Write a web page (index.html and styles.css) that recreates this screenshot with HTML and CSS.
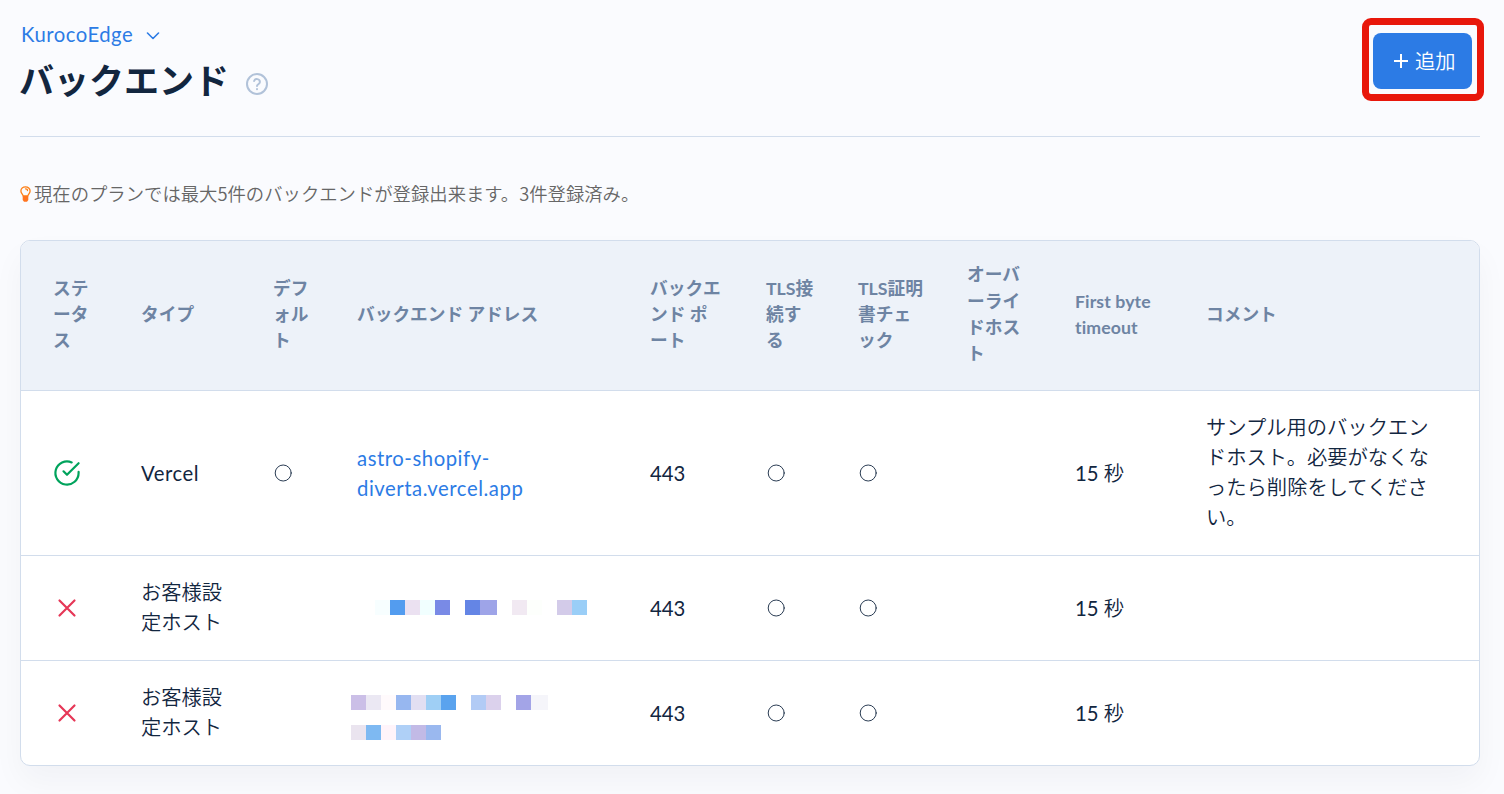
FILE: index.html
```
<!DOCTYPE html>
<html lang="ja">
<head>
    <meta charset="UTF-8">
    <meta name="viewport" content="width=device-width, initial-scale=1.0">
    <title>バックエンド</title>
    <link rel="stylesheet" href="styles.css">
</head>
<body>

<div class="container">
    <header class="header">
        <div class="header-title">
            <a class="pretitle" href="#"><span class="pretitle-text">KurocoEdge</span>
                <svg class="chevron" width="14" height="8" viewBox="0 0 14 8"><path d="M1.5 1l5.5 5.5L12.5 1"/></svg>
            </a>
            <h1 class="title"><span class="title-text">バックエンド</span>
                <svg class="help" width="24" height="24" viewBox="0 0 24 24"><circle cx="12" cy="12" r="10"/><path d="M9.1 9a3 3 0 0 1 5.8 1c0 2-2.9 2.4-2.9 4M12 17v.2"/></svg>
            </h1>
        </div>
        <div class="add-frame">
            <button class="add-button">
                <svg class="plus" width="14" height="14" viewBox="0 0 14 14"><path d="M7 0v14M0 7h14"/></svg>
                <span>追加</span>
            </button>
        </div>
    </header>

    <p class="note">
        <svg class="bulb" width="11" height="16" viewBox="0 0 11 16"><path class="bulb-glass" d="M3.2 10C3 8.5.9 7.400.9 5a4.6 4.2 0 0 1 9.2 0c0 2.4-2.1 3.5-2.3 5z"/><path class="bulb-base" d="M2.7 10h5.6v4l-1.3 1.700H4L2.7 14z"/><path class="bulb-glass" d="M5.5 2.8c1 0 2 .7 2 1.7"/></svg>
        <span>現在のプランでは最大5件のバックエンドが登録出来ます。3件登録済み。</span>
    </p>

    <div class="card">
        <table class="table">
            <colgroup>
                <col class="col-status"><col class="col-type"><col class="col-default"><col class="col-address"><col class="col-port"><col class="col-tls"><col class="col-cert"><col class="col-override"><col class="col-timeout"><col class="col-comment">
            </colgroup>
            <thead>
                <tr>
                    <th>ステ<br>ータ<br>ス</th>
                    <th>タイプ</th>
                    <th>デフ<br>ォル<br>ト</th>
                    <th>バックエンド アドレス</th>
                    <th>バックエ<br>ンド ポ<br>ート</th>
                    <th>TLS接<br>続す<br>る</th>
                    <th>TLS証明<br>書チェ<br>ック</th>
                    <th>オーバ<br>ーライ<br>ドホス<br>ト</th>
                    <th class="latin">First byte<br>timeout</th>
                    <th>コメント</th>
                </tr>
            </thead>
            <tbody>
                <tr class="row-tall">
                    <td><svg class="icon icon-ok" width="28" height="28" viewBox="0 0 28 28"><path d="M25.6 12.9v1.1a11.6 11.6 0 1 1-6.9-10.6M25.6 4.2L14 15.8l-3.5-3.5"/></svg></td>
                    <td class="latin">Vercel</td>
                    <td><svg class="icon circle" width="20" height="18" viewBox="0 0 20 18"><circle cx="10.2" cy="9" r="8"/></svg></td>
                    <td><a class="link" href="#">astro-shopify-<br>diverta.vercel.app</a></td>
                    <td class="num">443</td>
                    <td><svg class="icon circle" width="20" height="18" viewBox="0 0 20 18"><circle cx="10.2" cy="9" r="8"/></svg></td>
                    <td><svg class="icon circle" width="20" height="18" viewBox="0 0 20 18"><circle cx="10.2" cy="9" r="8"/></svg></td>
                    <td></td>
                    <td class="num">15 <span class="unit">秒</span></td>
                    <td class="text">サンプル用のバックエン<br>ドホスト。必要がなくな<br>ったら削除をしてくださ<br>い。</td>
                </tr>
                <tr>
                    <td><svg class="icon icon-ng" width="28" height="28" viewBox="0 0 28 28"><path d="M6.5 6.5l15 15M21.5 6.5l-15 15"/></svg></td>
                    <td class="text">お客様設<br>定ホスト</td>
                    <td></td>
                    <td>
                        <svg class="mosaic" width="240" height="16" viewBox="0 0 240 16">
                            <rect x="24" width="15" height="15" fill="#f7feff"/>
                            <rect x="39" width="15" height="15" fill="#539cef"/>
                            <rect x="54" width="15" height="15" fill="#ebe1f1"/>
                            <rect x="69" width="15" height="15" fill="#f1ffff"/>
                            <rect x="84" width="15" height="15" fill="#798ae6"/>
                            <rect x="114" width="15" height="15" fill="#6485e5"/>
                            <rect x="129" width="17" height="15" fill="#9ea4e8"/>
                            <rect x="161" width="15" height="15" fill="#f1e9f2"/>
                            <rect x="176" width="15" height="15" fill="#fdfffc"/>
                            <rect x="206" width="15" height="15" fill="#d3cbe9"/>
                            <rect x="221" width="15" height="15" fill="#9acef7"/>
                        </svg>
                    </td>
                    <td class="num">443</td>
                    <td><svg class="icon circle" width="20" height="18" viewBox="0 0 20 18"><circle cx="10.2" cy="9" r="8"/></svg></td>
                    <td><svg class="icon circle" width="20" height="18" viewBox="0 0 20 18"><circle cx="10.2" cy="9" r="8"/></svg></td>
                    <td></td>
                    <td class="num">15 <span class="unit">秒</span></td>
                    <td></td>
                </tr>
                <tr>
                    <td><svg class="icon icon-ng" width="28" height="28" viewBox="0 0 28 28"><path d="M6.5 6.5l15 15M21.5 6.5l-15 15"/></svg></td>
                    <td class="text">お客様設<br>定ホスト</td>
                    <td></td>
                    <td>
                        <svg class="mosaic" width="240" height="54" viewBox="0 0 240 54">
                            <rect x="0" y="9" width="15" height="15" fill="#cbbfe7"/>
                            <rect x="15" y="9" width="15" height="15" fill="#ebe8f3"/>
                            <rect x="30" y="9" width="15" height="15" fill="#fffafc"/>
                            <rect x="45" y="9" width="15" height="15" fill="#97b7f0"/>
                            <rect x="60" y="9" width="15" height="15" fill="#e2dff2"/>
                            <rect x="75" y="9" width="15" height="15" fill="#9fcff5"/>
                            <rect x="90" y="9" width="15" height="15" fill="#5aa3ee"/>
                            <rect x="120" y="9" width="15" height="15" fill="#b2cbf5"/>
                            <rect x="135" y="9" width="15" height="15" fill="#dbd1ec"/>
                            <rect x="165" y="9" width="15" height="15" fill="#a3a4e7"/>
                            <rect x="180" y="9" width="17" height="15" fill="#f5f5fa"/>
                            <rect x="0" y="39" width="15" height="15" fill="#eae4ef"/>
                            <rect x="15" y="39" width="15" height="15" fill="#7eb9f2"/>
                            <rect x="30" y="39" width="15" height="15" fill="#fff4fa"/>
                            <rect x="45" y="39" width="15" height="15" fill="#afd0f7"/>
                            <rect x="60" y="39" width="15" height="15" fill="#c2bae6"/>
                            <rect x="75" y="39" width="15" height="15" fill="#9ab8ef"/>
                        </svg>
                    </td>
                    <td class="num">443</td>
                    <td><svg class="icon circle" width="20" height="18" viewBox="0 0 20 18"><circle cx="10.2" cy="9" r="8"/></svg></td>
                    <td><svg class="icon circle" width="20" height="18" viewBox="0 0 20 18"><circle cx="10.2" cy="9" r="8"/></svg></td>
                    <td></td>
                    <td class="num">15 <span class="unit">秒</span></td>
                    <td></td>
                </tr>
            </tbody>
        </table>
    </div>
</div>

</body>
</html>
```
FILE: styles.css
```
* {
    box-sizing: border-box;
}

body {
    margin: 0;
    height: 794px;
    overflow: hidden;
    background: #fafbfe;
    color: #12263f;
    font-family: Lato, "Noto Sans CJK JP", sans-serif;
    font-size: 20.3px;
    font-weight: 350;
    line-height: 30px;
}

a {
    color: #2c7be5;
    text-decoration: none;
}

svg {
    display: block;
    fill: none;
    stroke: currentColor;
    stroke-linecap: round;
    stroke-linejoin: round;
}

.container {
    padding: 17px 24px 0 20px;
}

.header {
    display: flex;
    justify-content: space-between;
    height: 120px;
    border-bottom: 1px solid #d2ddec;
}

.pretitle {
    display: flex;
    align-items: center;
    gap: 13px;
    height: 34px;
    padding-left: 1px;
    font-weight: 400;
    letter-spacing: 0.5px;
}

.chevron {
    margin-top: 4px;
    stroke-width: 1.6;
}

.title {
    display: flex;
    align-items: center;
    gap: 16px;
    height: 58px;
    margin: 0 0 0 -1px;
    font-size: 35px;
    font-weight: 700;
    line-height: 58px;
}

.help {
    margin-top: 8px;
    color: #b1c2d9;
    stroke-width: 2;
}

/* red frame round the add button */
.add-frame {
    width: 122px;
    height: 83px;
    margin: 1px -4px 0 0;
    padding: 8px 4px;
    border: 7px solid #e8170b;
    border-radius: 9px;
}

.add-button {
    display: flex;
    align-items: center;
    gap: 7px;
    width: 99px;
    height: 56px;
    margin: 0;
    padding: 0 0 0 21px;
    border: 0;
    border-radius: 8px;
    background: #2c7be5;
    color: #fff;
    font: inherit;
}

.plus {
    stroke-width: 2;
    stroke-linecap: butt;
}

.note {
    display: flex;
    align-items: center;
    gap: 3px;
    height: 30px;
    margin: 41px 0 32px;
    color: #666;
    font-family: "Noto Sans CJK JP", sans-serif;
    font-size: 18.35px;
}

.bulb {
    margin-top: 2px;
    color: #fd7e14;
    stroke-width: 1.3;
}

.bulb-base {
    fill: #ff7420;
    stroke: none;
}

.card {
    height: 526px;
    overflow: hidden;
    background: #fff;
    border: 1px solid #d2ddec;
    border-radius: 10px;
    box-shadow: 0 16px 32px rgba(18, 38, 63, 0.04);
}

.table {
    width: 1458px;
    table-layout: fixed;
    border-collapse: separate;
    border-spacing: 0;
}

.col-status { width: 100px; }
.col-type { width: 132px; }
.col-default { width: 84px; }
.col-address { width: 293px; }
.col-port { width: 116px; }
.col-tls { width: 92px; }
.col-cert { width: 109px; }
.col-override { width: 108px; }
.col-timeout { width: 131px; }
.col-comment { width: 293px; }

.table th,
.table td {
    height: 105px;
    padding: 0 0 0 20px;
    text-align: left;
    vertical-align: middle;
    white-space: nowrap;
    border-bottom: 1px solid #d2ddec;
}

.table th {
    height: 150px;
    padding-bottom: 1px;
    background: #edf2f9;
    color: #6e84a3;
    font-size: 17.7px;
    font-weight: 700;
    line-height: 26.3px;
}

.table th:first-child,
.table td:first-child {
    padding-left: 32px;
}

.table .row-tall td {
    height: 165px;
}

.table tbody tr:last-child td {
    height: 104px;
    border-bottom: 0;
}

.table .text {
    padding-bottom: 2px;
}

.table .latin,
.link {
    font-weight: 400;
    letter-spacing: 0.55px;
}

.table .num {
    font-weight: 400;
}

.unit {
    font-weight: 350;
}

.table th.latin {
    font-weight: 700;
    letter-spacing: 0.1px;
}

.icon-ok {
    color: #00a35c;
    stroke-width: 2.2;
}

.icon-ng {
    color: #e63757;
    stroke-width: 2.2;
}

.circle {
    stroke-width: 0.9;
}

.mosaic {
    margin-left: -6px;
    stroke: none;
    shape-rendering: crispEdges;
}
```
